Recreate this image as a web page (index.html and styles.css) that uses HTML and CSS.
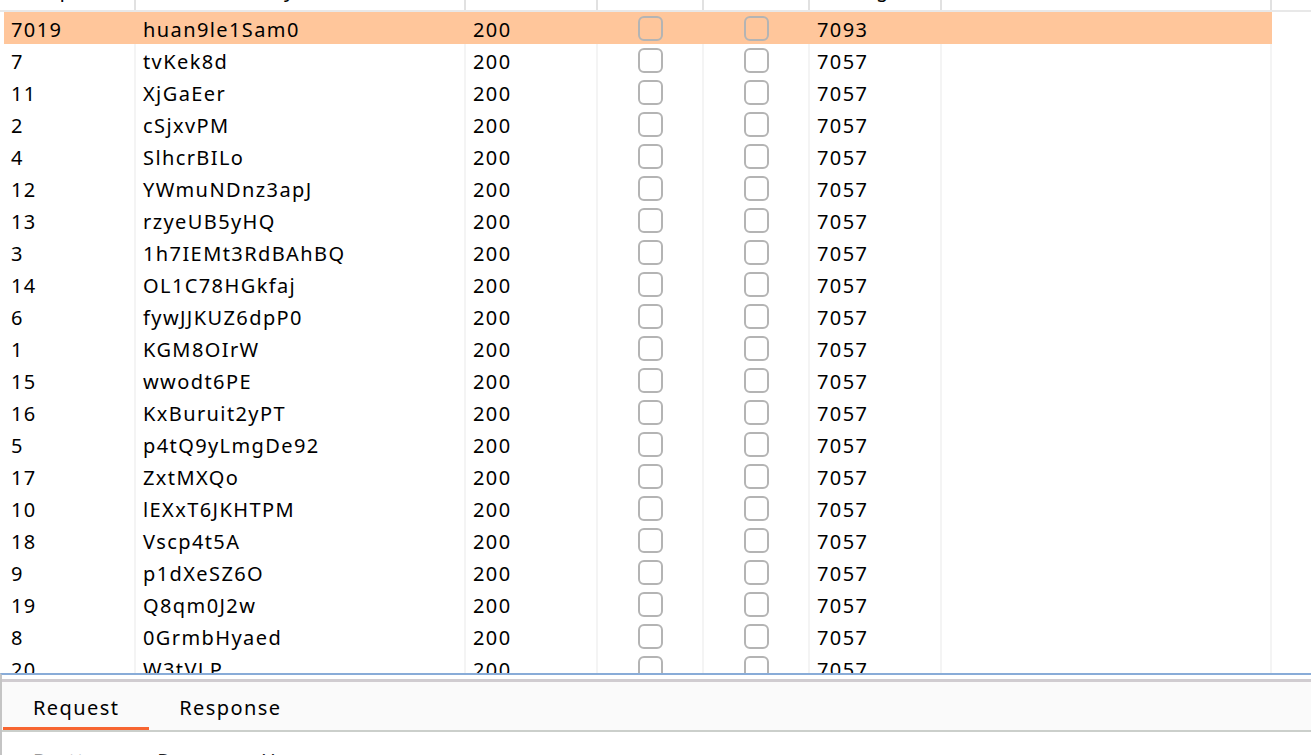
FILE: index.html
```html
<!DOCTYPE html>
<html>
<head>
<meta charset="utf-8">
<link rel="stylesheet" href="styles.css">
</head>
<body>
<div class="app">
  <div class="head grid">
    <div class="hcell"><span>Request</span></div>
    <div class="hcell"><span>Payload</span></div>
    <div class="hcell"><span>Status code</span></div>
    <div class="hcell"><span>Error</span></div>
    <div class="hcell"><span>Timeout</span></div>
    <div class="hcell"><span>Length</span></div>
    <div class="hcell"><span>Comment</span></div>
  </div>
  <div class="body">
    <div class="row grid sel"><div class="cell">7019</div><div class="cell">huan9le1Sam0</div><div class="cell">200</div><div class="cell cb"><span class="box"></span></div><div class="cell cb"><span class="box"></span></div><div class="cell">7093</div><div class="cell"></div></div>
    <div class="row grid"><div class="cell">7</div><div class="cell">tvKek8d</div><div class="cell">200</div><div class="cell cb"><span class="box"></span></div><div class="cell cb"><span class="box"></span></div><div class="cell">7057</div><div class="cell"></div></div>
    <div class="row grid"><div class="cell">11</div><div class="cell">XjGaEer</div><div class="cell">200</div><div class="cell cb"><span class="box"></span></div><div class="cell cb"><span class="box"></span></div><div class="cell">7057</div><div class="cell"></div></div>
    <div class="row grid"><div class="cell">2</div><div class="cell">cSjxvPM</div><div class="cell">200</div><div class="cell cb"><span class="box"></span></div><div class="cell cb"><span class="box"></span></div><div class="cell">7057</div><div class="cell"></div></div>
    <div class="row grid"><div class="cell">4</div><div class="cell">SlhcrBILo</div><div class="cell">200</div><div class="cell cb"><span class="box"></span></div><div class="cell cb"><span class="box"></span></div><div class="cell">7057</div><div class="cell"></div></div>
    <div class="row grid"><div class="cell">12</div><div class="cell">YWmuNDnz3apJ</div><div class="cell">200</div><div class="cell cb"><span class="box"></span></div><div class="cell cb"><span class="box"></span></div><div class="cell">7057</div><div class="cell"></div></div>
    <div class="row grid"><div class="cell">13</div><div class="cell">rzyeUB5yHQ</div><div class="cell">200</div><div class="cell cb"><span class="box"></span></div><div class="cell cb"><span class="box"></span></div><div class="cell">7057</div><div class="cell"></div></div>
    <div class="row grid"><div class="cell">3</div><div class="cell">1h7IEMt3RdBAhBQ</div><div class="cell">200</div><div class="cell cb"><span class="box"></span></div><div class="cell cb"><span class="box"></span></div><div class="cell">7057</div><div class="cell"></div></div>
    <div class="row grid"><div class="cell">14</div><div class="cell">OL1C78HGkfaj</div><div class="cell">200</div><div class="cell cb"><span class="box"></span></div><div class="cell cb"><span class="box"></span></div><div class="cell">7057</div><div class="cell"></div></div>
    <div class="row grid"><div class="cell">6</div><div class="cell">fywJJKUZ6dpP0</div><div class="cell">200</div><div class="cell cb"><span class="box"></span></div><div class="cell cb"><span class="box"></span></div><div class="cell">7057</div><div class="cell"></div></div>
    <div class="row grid"><div class="cell">1</div><div class="cell">KGM8OIrW</div><div class="cell">200</div><div class="cell cb"><span class="box"></span></div><div class="cell cb"><span class="box"></span></div><div class="cell">7057</div><div class="cell"></div></div>
    <div class="row grid"><div class="cell">15</div><div class="cell">wwodt6PE</div><div class="cell">200</div><div class="cell cb"><span class="box"></span></div><div class="cell cb"><span class="box"></span></div><div class="cell">7057</div><div class="cell"></div></div>
    <div class="row grid"><div class="cell">16</div><div class="cell">KxBuruit2yPT</div><div class="cell">200</div><div class="cell cb"><span class="box"></span></div><div class="cell cb"><span class="box"></span></div><div class="cell">7057</div><div class="cell"></div></div>
    <div class="row grid"><div class="cell">5</div><div class="cell">p4tQ9yLmgDe92</div><div class="cell">200</div><div class="cell cb"><span class="box"></span></div><div class="cell cb"><span class="box"></span></div><div class="cell">7057</div><div class="cell"></div></div>
    <div class="row grid"><div class="cell">17</div><div class="cell">ZxtMXQo</div><div class="cell">200</div><div class="cell cb"><span class="box"></span></div><div class="cell cb"><span class="box"></span></div><div class="cell">7057</div><div class="cell"></div></div>
    <div class="row grid"><div class="cell">10</div><div class="cell">lEXxT6JKHTPM</div><div class="cell">200</div><div class="cell cb"><span class="box"></span></div><div class="cell cb"><span class="box"></span></div><div class="cell">7057</div><div class="cell"></div></div>
    <div class="row grid"><div class="cell">18</div><div class="cell">Vscp4t5A</div><div class="cell">200</div><div class="cell cb"><span class="box"></span></div><div class="cell cb"><span class="box"></span></div><div class="cell">7057</div><div class="cell"></div></div>
    <div class="row grid"><div class="cell">9</div><div class="cell">p1dXeSZ6O</div><div class="cell">200</div><div class="cell cb"><span class="box"></span></div><div class="cell cb"><span class="box"></span></div><div class="cell">7057</div><div class="cell"></div></div>
    <div class="row grid"><div class="cell">19</div><div class="cell">Q8qm0J2w</div><div class="cell">200</div><div class="cell cb"><span class="box"></span></div><div class="cell cb"><span class="box"></span></div><div class="cell">7057</div><div class="cell"></div></div>
    <div class="row grid"><div class="cell">8</div><div class="cell">0GrmbHyaed</div><div class="cell">200</div><div class="cell cb"><span class="box"></span></div><div class="cell cb"><span class="box"></span></div><div class="cell">7057</div><div class="cell"></div></div>
    <div class="row grid"><div class="cell">20</div><div class="cell">W3tVLP</div><div class="cell">200</div><div class="cell cb"><span class="box"></span></div><div class="cell cb"><span class="box"></span></div><div class="cell">7057</div><div class="cell"></div></div>
  </div>
  <div class="bottom">
    <div class="tabs">
      <div class="tab active">Request</div>
      <div class="tab">Response</div>
    </div>
    <div class="subtabs">
      <div class="subtab dim">Pretty</div>
      <div class="subtab">Raw</div>
      <div class="subtab">Hex</div>
    </div>
  </div>
</div>
</body>
</html>
```

FILE: styles.css
```css
* { box-sizing: border-box; }

html, body {
  margin: 0;
  padding: 0;
  background: #ffffff;
}

body {
  font-family: "Noto Sans", "Open Sans", sans-serif;
  font-size: 20px;
  letter-spacing: 1.4px;
  color: #000000;
}

.app {
  width: 1311px;
  height: 755px;
  display: flex;
  flex-direction: column;
  overflow: hidden;
}

.grid {
  display: grid;
  grid-template-columns: 132px 330px 132px 106px 106px 132px 330px;
}

.head {
  flex: none;
  height: 12px;
  padding-left: 4px;
  border-bottom: 2px solid #e8e8e8;
}

.hcell {
  height: 10px;
  overflow: hidden;
  border-right: 2px solid #e1e1e1;
  text-align: center;
  white-space: nowrap;
}

.hcell span {
  display: block;
  line-height: 20px;
  margin-top: -20px;
}

.body {
  flex: none;
  height: 661px;
  overflow: hidden;
  padding-left: 4px;
}

.row {
  width: max-content;
  height: 32px;
}

.row.sel {
  background: #ffc69b;
}

.cell {
  height: 32px;
  padding: 2px 7px 0 7px;
  line-height: 32px;
  white-space: nowrap;
  overflow: hidden;
  border-right: 2px solid #f4f4f4;
}

.row.sel .cell {
  border-right-color: transparent;
}

.cell.cb {
  padding: 0;
  display: flex;
  align-items: center;
  justify-content: center;
}

.box {
  display: block;
  width: 25px;
  height: 25px;
  border: 2px solid #b4b4b4;
  border-radius: 6px;
}

.bottom {
  flex: 1;
  border-top: 2px solid #89acd8;
  border-left: 2px solid #c4c4c4;
  padding-top: 4px;
}

.tabs {
  display: flex;
  height: 53px;
  border-top: 3px solid #d0ccd0;
  border-bottom: 2px solid #cbcfcb;
  background: #fafafa;
  padding-left: 1px;
}

.tab {
  padding: 14px 30px 0 30px;
  line-height: 24px;
  height: 48px;
  border-bottom: 3px solid transparent;
}

.tab.active {
  border-bottom-color: #f76531;
}

.subtabs {
  display: flex;
  padding-top: 17px;
  padding-left: 31px;
  gap: 60px;
}

.subtab {
  line-height: 24px;
  color: #222222;
}

.subtab.dim {
  color: #9a9a9a;
}
```
